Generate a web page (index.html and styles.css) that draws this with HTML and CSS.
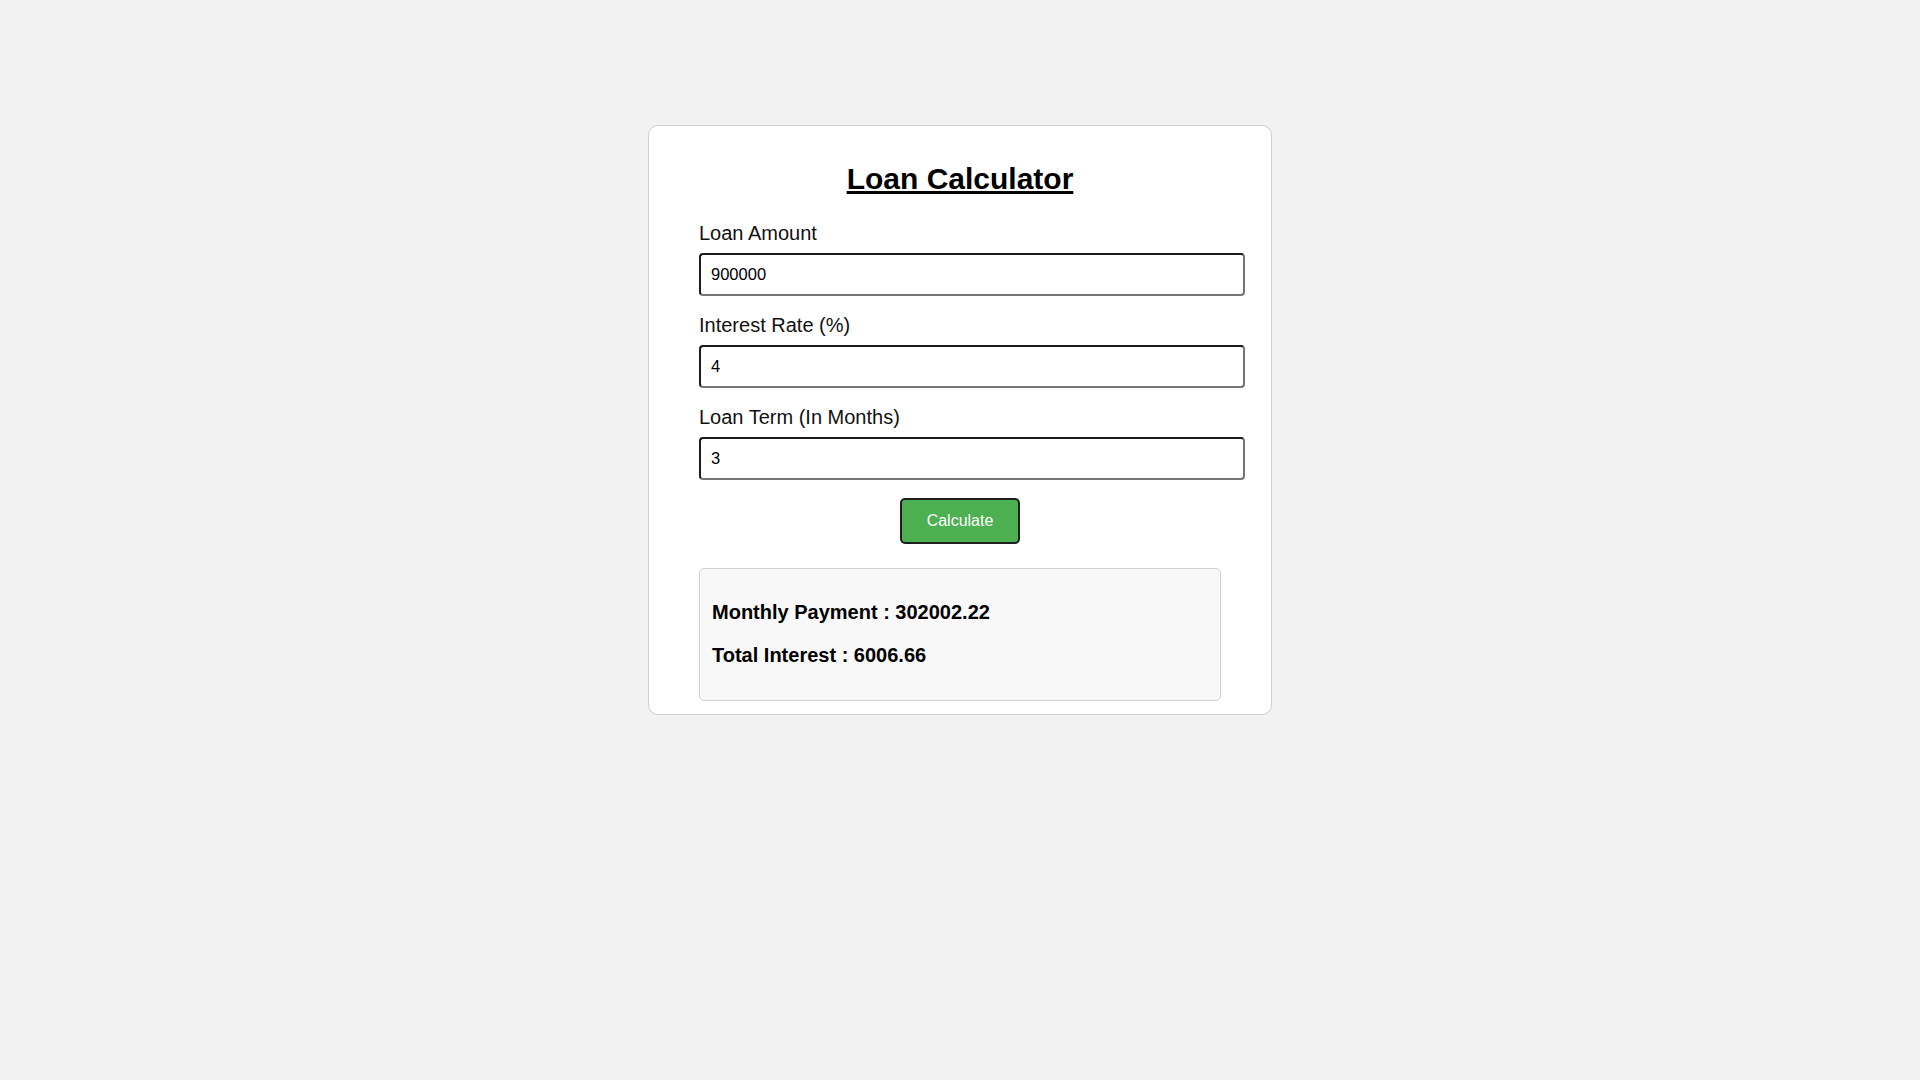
FILE: index.html
```html
<!DOCTYPE html>
<html lang="en">
<head>
<meta charset="utf-8">
<title>Loan Calculator</title>
<link rel="stylesheet" href="styles.css">
</head>
<body>
<div class="page">
  <div class="card">
    <h1 class="title">Loan Calculator</h1>
    <label class="label" for="amount">Loan Amount</label>
    <input class="field" id="amount" type="text" value="900000">
    <label class="label" for="rate">Interest Rate (%)</label>
    <input class="field" id="rate" type="text" value="4">
    <label class="label" for="term">Loan Term (In Months)</label>
    <input class="field" id="term" type="text" value="3">
    <div class="actions">
      <button class="btn" type="button">Calculate</button>
    </div>
    <div class="result">
      <p class="result-line">Monthly Payment : 302002.22</p>
      <p class="result-line">Total Interest : 6006.66</p>
    </div>
  </div>
</div>
</body>
</html>
```

FILE: styles.css
```css
html, body {
  margin: 0;
  padding: 0;
  background: #f2f2f2;
  font-family: "Liberation Sans", Arial, sans-serif;
}

.page {
  display: flex;
  justify-content: center;
  align-items: flex-start;
  padding-top: 125px;
  min-height: 1080px;
  box-sizing: border-box;
}

.card {
  width: 522px;
  background: #ffffff;
  border: 1px solid #cfcfcf;
  border-radius: 10px;
  padding: 36px 50px 13px;
  display: flex;
  flex-direction: column;
}

.title {
  margin: 0 0 26px;
  font-size: 30px;
  font-weight: bold;
  text-align: center;
  text-decoration: underline;
  color: #000;
}

.label {
  display: block;
  font-size: 20px;
  line-height: 23px;
  color: #111;
  margin-bottom: 8px;
}

.field {
  display: block;
  width: 522px;
  height: 19px;
  padding: 10px;
  margin: 0 0 18px;
  font-family: "Liberation Sans", Arial, sans-serif;
  font-size: 16.5px;
  line-height: 19px;
  color: #000;
  background: #fff;
  border-width: 2px;
  border-style: solid;
  border-color: #1c1c1c #767676 #767676 #1c1c1c;
  border-radius: 4px;
  outline: none;
}

.actions {
  display: flex;
  justify-content: center;
  margin-bottom: 24px;
}

.btn {
  font-family: "Liberation Sans", Arial, sans-serif;
  font-size: 16px;
  line-height: 18px;
  padding: 12px 25px;
  color: #fff;
  background: #4caf50;
  border: 2px solid #1e1e1e;
  border-radius: 5px;
  cursor: pointer;
}

.result {
  background: #f8f8f8;
  border: 1px solid #d2d2d2;
  border-radius: 5px;
  padding: 12px 12px 13px;
}

.result-line {
  margin: 20px 0;
  font-size: 20px;
  line-height: 23px;
  font-weight: bold;
  color: #000;
}
```
